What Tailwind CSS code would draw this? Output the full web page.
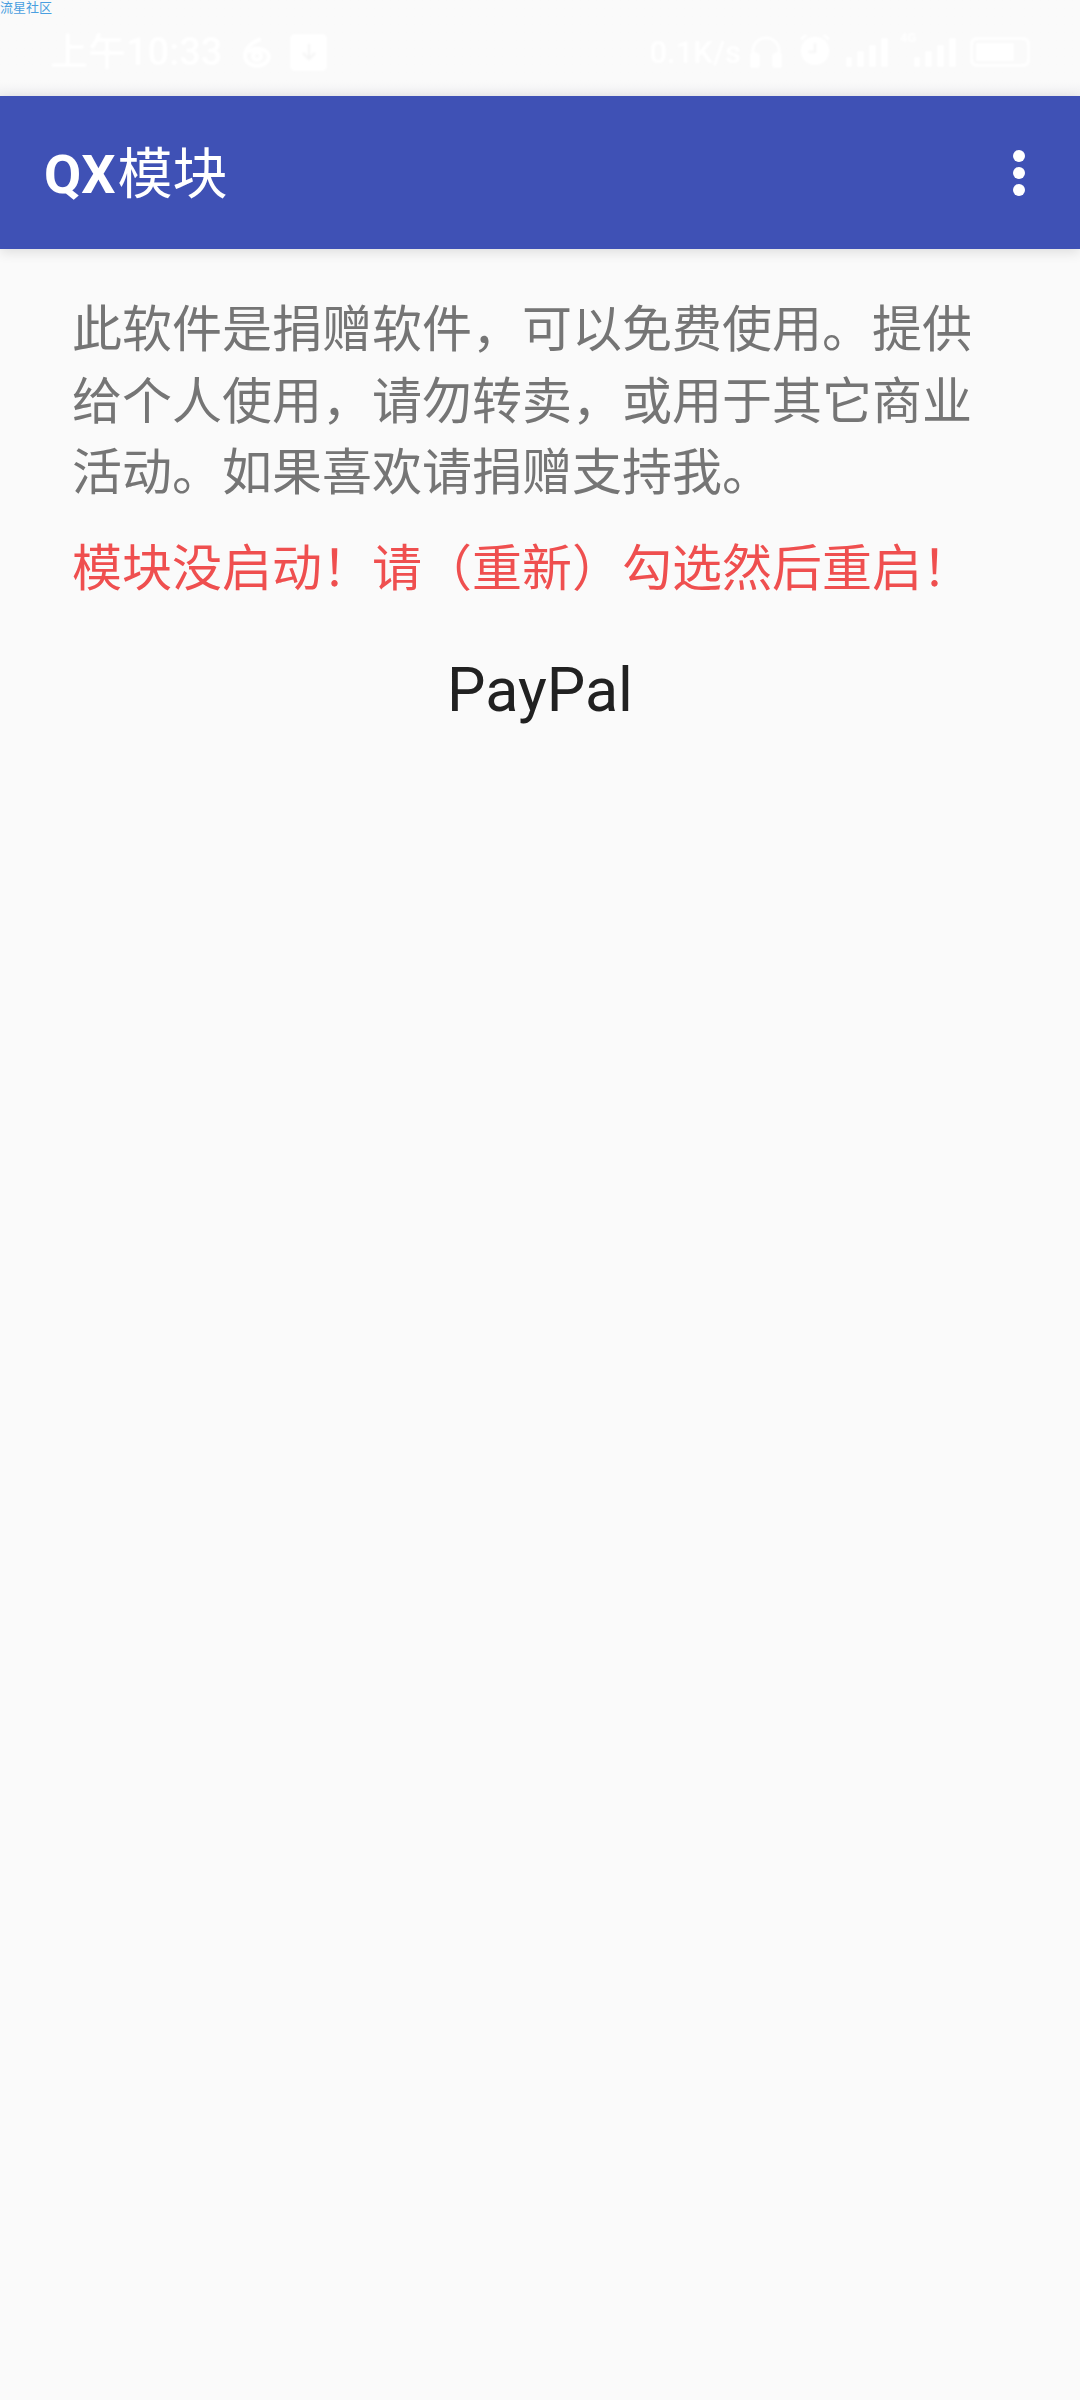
<!DOCTYPE html>
<html lang="zh">
<head>
  <meta charset="utf-8"/>
  <meta name="viewport" content="width=device-width, initial-scale=1.0"/>
  <title>QX模块</title>
  <script src="https://cdn.jsdelivr.net/npm/@tailwindcss/browser@4"></script>
</head>
<body class="relative w-[1080px] h-[2400px] overflow-hidden bg-[#fafafa] font-['Roboto','Noto_Sans_CJK_SC',sans-serif]">
  <!-- watermark -->
  <div class="absolute left-0 top-0 text-[13px] leading-[16px] text-[#4a9fe0]">流星社区</div>

  <!-- status bar -->
  <div class="h-[96px] flex items-center justify-between pl-[50px] pr-[50px] pt-[8px] bg-gradient-to-b from-[#fafafa] from-85% to-[#f1f1f3] text-white">
    <div class="flex items-center blur-[1px]">
      <span class="text-[38px] leading-none font-medium">上午10:33</span>
      <svg class="ml-[20px]" width="30" height="32" viewBox="0 0 30 32" fill="none" stroke="white" stroke-width="4"><path d="M19 3C10 6 3 12 3 20a12 10 0 0 0 24 0a12 9 0 0 0-21-4"/><circle cx="15" cy="20" r="4"/></svg>
      <div class="ml-[18px] w-[37px] h-[37px] rounded-[5px] bg-white flex items-center justify-center">
        <svg width="16" height="18" viewBox="0 0 16 18" fill="none" stroke="#f5f5f5" stroke-width="2"><path d="M8 1v15M2 10l6 6 6-6"/></svg>
      </div>
    </div>
    <div class="flex items-center blur-[1px]">
      <span class="text-[31px] leading-none font-medium">0.1K/s</span>
      <svg class="ml-[9px]" width="32" height="32" viewBox="0 0 34 34" fill="none" stroke="white" stroke-width="3"><path d="M3 24V16a14 14 0 0 1 28 0v8"/><rect x="1" y="19" width="8" height="14" rx="3" fill="white"/><rect x="25" y="19" width="8" height="14" rx="3" fill="white"/></svg>
      <svg class="ml-[16px] mt-[-6px]" width="34" height="36" viewBox="0 0 36 36" fill="white"><circle cx="18" cy="20" r="15"/><path d="M2 7l6-5 2 2-6 5zM34 7l-6-5-2 2 6 5z"/><path d="M18 12v9h-7" fill="none" stroke="#f5f5f5" stroke-width="2"/></svg>
      <div class="ml-[14px] flex items-end gap-[5px] h-[29px]">
        <div class="w-[6px] h-[10px] bg-white rounded-[2px]"></div>
        <div class="w-[7px] h-[16px] bg-white rounded-[2px]"></div>
        <div class="w-[7px] h-[22px] bg-white rounded-[2px]"></div>
        <div class="w-[7px] h-[29px] bg-white rounded-[2px]"></div>
      </div>
      <div class="relative ml-[26px] flex items-end gap-[5px] h-[29px]">
        <span class="absolute left-[-14px] top-[-7px] text-[13px] leading-none font-bold">4G</span>
        <div class="w-[6px] h-[10px] bg-white rounded-[2px]"></div>
        <div class="w-[7px] h-[16px] bg-white rounded-[2px]"></div>
        <div class="w-[7px] h-[22px] bg-white rounded-[2px]"></div>
        <div class="w-[7px] h-[29px] bg-white rounded-[2px]"></div>
      </div>
      <div class="ml-[14px] w-[60px] h-[30px] rounded-[7px] border-[3px] border-white p-[3px]">
        <div class="w-[38px] h-full bg-white rounded-[2px]"></div>
      </div>
    </div>
  </div>

  <!-- app bar -->
  <header class="relative h-[153px] bg-[#3f51b5] flex items-center justify-between pl-[44px] pr-[55px] shadow-[0_3px_12px_rgba(0,0,0,0.12)]">
    <h1 class="text-[54px] leading-none text-white mt-[4px]"><span class="font-bold">QX</span><span class="ml-[2px] text-[55px] font-normal">模块</span></h1>
    <div class="flex flex-col gap-[5px]">
      <span class="w-[12px] h-[12px] rounded-full bg-white"></span>
      <span class="w-[12px] h-[12px] rounded-full bg-white"></span>
      <span class="w-[12px] h-[12px] rounded-full bg-white"></span>
    </div>
  </header>

  <!-- content -->
  <main class="px-[72px] pt-[46px]">
    <p class="text-[50px] leading-[71.6px] text-[#757575]">此软件是捐赠软件，可以免费使用。提供给个人使用，请勿转卖，或用于其它商业活动。如果喜欢请捐赠支持我。</p>
    <p class="mt-[23px] text-[50px] leading-[72px] text-[#ef4f4f] whitespace-nowrap">模块没启动！请（重新）勾选然后重启！</p>
    <div class="mt-[49px] text-center text-[61px] leading-[72px] text-[#212121]">PayPal</div>
  </main>
</body>
</html>
